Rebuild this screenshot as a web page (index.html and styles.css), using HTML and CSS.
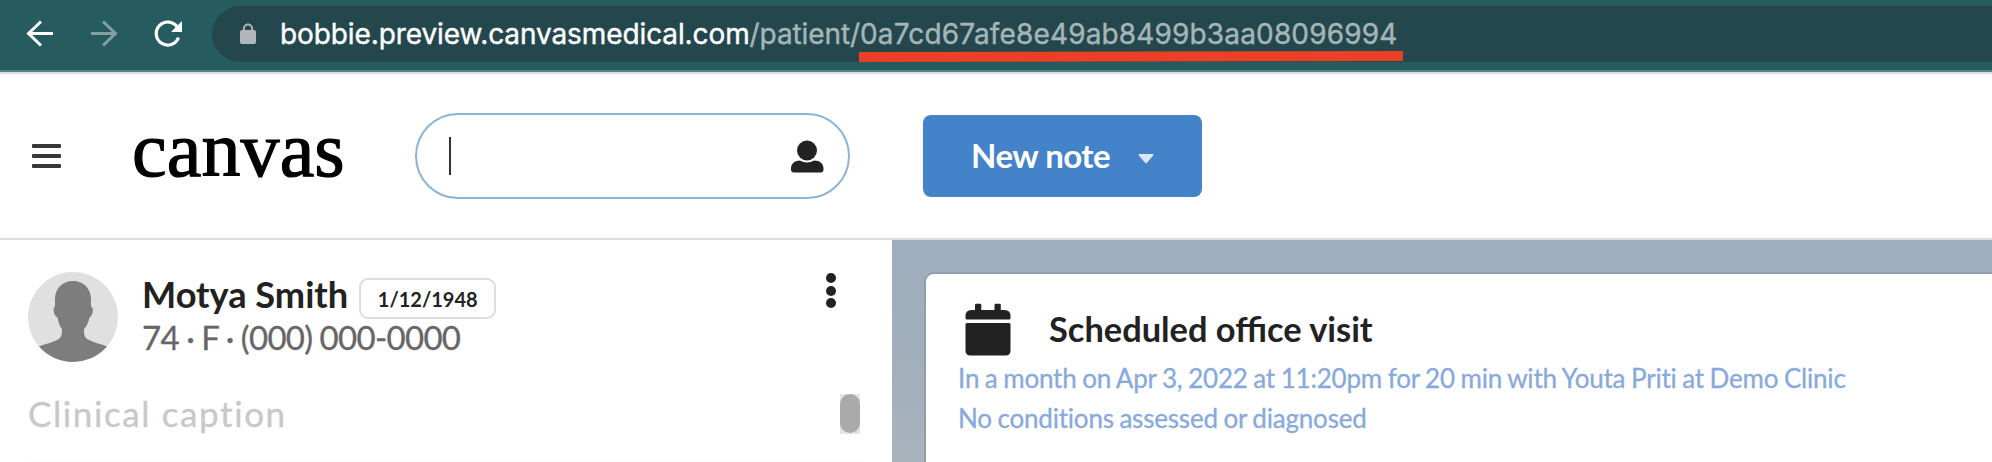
FILE: index.html
```html
<!DOCTYPE html>
<html lang="en">
<head>
<meta charset="utf-8">
<title>Canvas</title>
<link rel="stylesheet" href="styles.css">
</head>
<body>
<div class="browser-bar">
  <svg class="nav-icons" width="212" height="70" viewBox="0 0 212 70" fill="none" stroke-width="3">
    <path d="M53 33.5H29M41 21.5L28.5 33.5L41 45.5" stroke="#fff"/>
    <path d="M91 33.5H115M103 21.5L115.500 33.500L103 45.500" stroke="#84a0a3"/>
    <path d="M177.500 27.500A11.500 11.500 0 1 0 178.500 37.500" stroke="#fff" stroke-width="3.200"/>
    <path d="M182 21V32H171Z" fill="#fff"/>
  </svg>
  <div class="address">
    <svg class="lock" width="16" height="22" viewBox="0 0 16 22"><path d="M4 8V5.500a4 4 0 0 1 8 0V8" fill="none" stroke="#b3b5bc" stroke-width="2"/><rect y="7" width="16" height="14" rx="2" fill="#b3b5bc"/></svg>
    <div class="url"><span class="host">bobbie.preview.canvasmedical.com</span><span class="path">/patient/</span><span class="record">0a7cd67afe8e49ab8499b3aa08096994</span>
      <svg class="underline" width="544" height="11" viewBox="0 0 544 11"><path d="M0 1L544 0V10L0 11Z" fill="#eb4026"/></svg>
    </div>
  </div>
</div>
<header class="header">
  <div class="menu"><i></i><i></i><i></i></div>
  <div class="logo"><span>canvas</span></div>
  <div class="search">
    <div class="cursor"></div>
    <svg width="34" height="33" viewBox="0 0 34 33" fill="#222"><circle cx="17" cy="10.500" r="10"/><path d="M10 20.500C14 23 20 23 24 20.500C30 20.500 33.500 24 33.500 28.500V29.500Q33.500 32.500 30.500 32.500H4Q1 32.500 1 29.500V28.500C1 24 4.500 20.500 10 20.500Z"/></svg>
  </div>
  <div class="new-note"><span>New note</span><svg width="16" height="10" viewBox="0 0 16 10"><path d="M1.200 0H14.800Q16 .6 15 1.800L9 8.700Q8 9.700 7 8.700L1 1.800Q0 .6 1.200 0Z" fill="#dbe7f5"/></svg></div>
</header>
<div class="body">
  <aside class="sidebar">
    <div class="patient">
      <svg class="avatar" width="90" height="90" viewBox="0 0 90 90">
        <defs><clipPath id="disc"><circle cx="45" cy="45" r="45"/></clipPath></defs>
        <g clip-path="url(#disc)"><rect width="90" height="90" fill="#e0e0e0"/>
        <path fill="#7d7d7d" d="M45 9C56 9 63 17 63 27V34.500C66 35 65 44 61.500 45.500C60.500 51 58 55 56 57C56 63 56.500 66 61 68C67 71 73 72 79 74.500L90 82V90H0V82L11 74.500C17 72 23 71 29 68C33.500 66 34 63 34 57C32 55 30.500 51 29.500 45.500C25.500 44 24.500 35 27 34.500V27C27 17 34 9 45 9Z"/></g>
      </svg>
      <div class="details">
        <div class="name-row"><span class="name">Motya Smith</span><span class="dob">1/12/1948</span></div>
        <div class="demographics">74 · F · (000) 000-0000</div>
      </div>
      <div class="more"><i></i><i></i><i></i></div>
    </div>
    <div class="caption-row"><span class="caption">Clinical caption</span><div class="scroll"><div class="thumb"></div></div></div>
    <div class="divider"></div>
  </aside>
  <main class="main">
    <article class="card">
      <div class="card-head">
        <svg width="46" height="53" viewBox="0 0 46 53" fill="#222"><path d="M.5 17V13Q.5 7 6.500 7H10V2Q10 .7 11.300 .7H15Q16.300 .7 16.300 2V7H29.500V2Q29.500 .7 30.800 .7H34.500Q35.800 .7 35.800 2V7H39.500Q45.500 7 45.500 13V15Q45.500 16.500 44 16.500H2Q.5 16.500 .5 15Z"/><path d="M.5 21.500Q.5 20 2 20H44Q45.500 20 45.500 21.500V47.500Q45.500 52.500 40.500 52.500H5.500Q.5 52.500 .5 47.500Z"/></svg>
        <h2 class="title">Scheduled office visit</h2>
      </div>
      <p class="line when">In a month on Apr 3, 2022 at 11:20pm for 20 min with Youta Priti at Demo Clinic</p>
      <p class="line cond">No conditions assessed or diagnosed</p>
    </article>
  </main>
</div>
</body>
</html>
```
FILE: styles.css
```css
* { box-sizing: border-box; margin: 0; }
body { width: 1992px; height: 462px; overflow: hidden; display: flex; flex-direction: column; background: #fff; font-family: Lato, sans-serif; color: #222; white-space: nowrap; }
svg { display: block; flex: none; }
.browser-bar { height: 72px; flex: none; display: flex; align-items: flex-start; background: #265b60; border-bottom: 2px solid #568288; }
.address { flex: 1; height: 56px; margin-top: 6px; padding-left: 28px; display: flex; align-items: center; background: #23474c; border-radius: 28px 0 0 28px; }
.url { position: relative; margin-left: 24px; font: 28px/56px Inter, sans-serif; letter-spacing: -0.1px; color: #a4b6b8; -webkit-text-stroke: .4px currentColor; }
.host { color: #fff; }
.record { letter-spacing: .15px; }
.underline { position: absolute; left: 579px; top: 45px; }
.header { height: 168px; flex: none; display: flex; align-items: center; border-top: 2px solid #ddd; border-bottom: 2px solid #ddd; }
.menu { width: 29px; margin-left: 32px; display: flex; flex-direction: column; gap: 5.5px; }
.menu i { height: 4.500px; border-radius: 1px; background: #383838; }
.logo { width: 210px; margin-left: 71px; font: 78px/86px "Liberation Serif", serif; color: #000; }
.logo span { display: inline-block; transform: translateY(-6px); letter-spacing: 0.1px; -webkit-text-stroke: 1.2px #000; }
.search { width: 435px; height: 86px; margin-left: 73px; padding: 0 24px 0 32px; display: flex; align-items: center; justify-content: space-between; border: 2px solid #8cb4d9; border-radius: 43px; }
.cursor { width: 2px; height: 38px; background: #333; }
.new-note { width: 279px; height: 82px; margin-left: 73px; padding: 0 0 2px 48px; display: flex; align-items: center; gap: 28px; border-radius: 8px; background: #4483ca; color: #fff; font-weight: 700; font-size: 33px; letter-spacing: -.5px; }
.new-note svg { margin-top: 7px; }
.body { flex: 1; display: flex; }
.sidebar { width: 892px; flex: none; display: flex; flex-direction: column; }
.patient { height: 122px; padding: 32px 56px 0 28px; display: flex; align-items: flex-start; }
.details { margin: 4px 0 0 24px; flex: 1; }
.name-row { height: 41px; display: flex; align-items: center; gap: 11px; }
.name { font-size: 36.2px; font-weight: 700; line-height: 42px; padding-bottom: 5px; }
.dob { width: 137px; height: 41px; margin-top: 3px; border: 2px solid #ddd; border-radius: 9px; font-size: 20px; font-weight: 700; line-height: 38px; text-align: center; }
.demographics { font-size: 33px; line-height: 40px; color: #666; letter-spacing: -.7px; word-spacing: -.5px; -webkit-text-stroke: .3px #666; }
.more { display: flex; flex-direction: column; gap: 2.5px; margin-top: 1px; }
.more i { width: 10px; height: 10px; border-radius: 50%; background: #222; }
.caption-row { height: 99px; padding: 32px 32px 0 28px; display: flex; justify-content: space-between; align-items: flex-start; }
.caption { font-size: 35px; line-height: 39px; color: #c8c8c8; letter-spacing: 1.6px; -webkit-text-stroke: .3px #c8c8c8; }
.scroll { width: 20px; height: 40px; background: #e4e4e4; }
.thumb { height: 39px; border-radius: 10px; background: #aaa; }
.divider { height: 1px; margin: 0 28px; background: #fafafa; }
.main { flex: 1; padding: 34px 0 0 34px; background: linear-gradient(#9eaebe, #a1afbb 50%, #aab4bd); }
.card { height: 200px; padding: 30px 0 0 32px; background: #fff; border-radius: 8px 0 0 0; box-shadow: 0 0 0 2px #8f9dac; }
.card-head { height: 54px; padding-left: 7px; display: flex; align-items: flex-start; gap: 38px; }
.card-head svg { margin-top: -1px; }
.title { font-size: 34.4px; line-height: 50px; font-weight: 700; }
.line { font-size: 26px; line-height: 40px; color: #88a9db; letter-spacing: -.2px; word-spacing: -.8px; -webkit-text-stroke: .3px #88a9db; }
```
